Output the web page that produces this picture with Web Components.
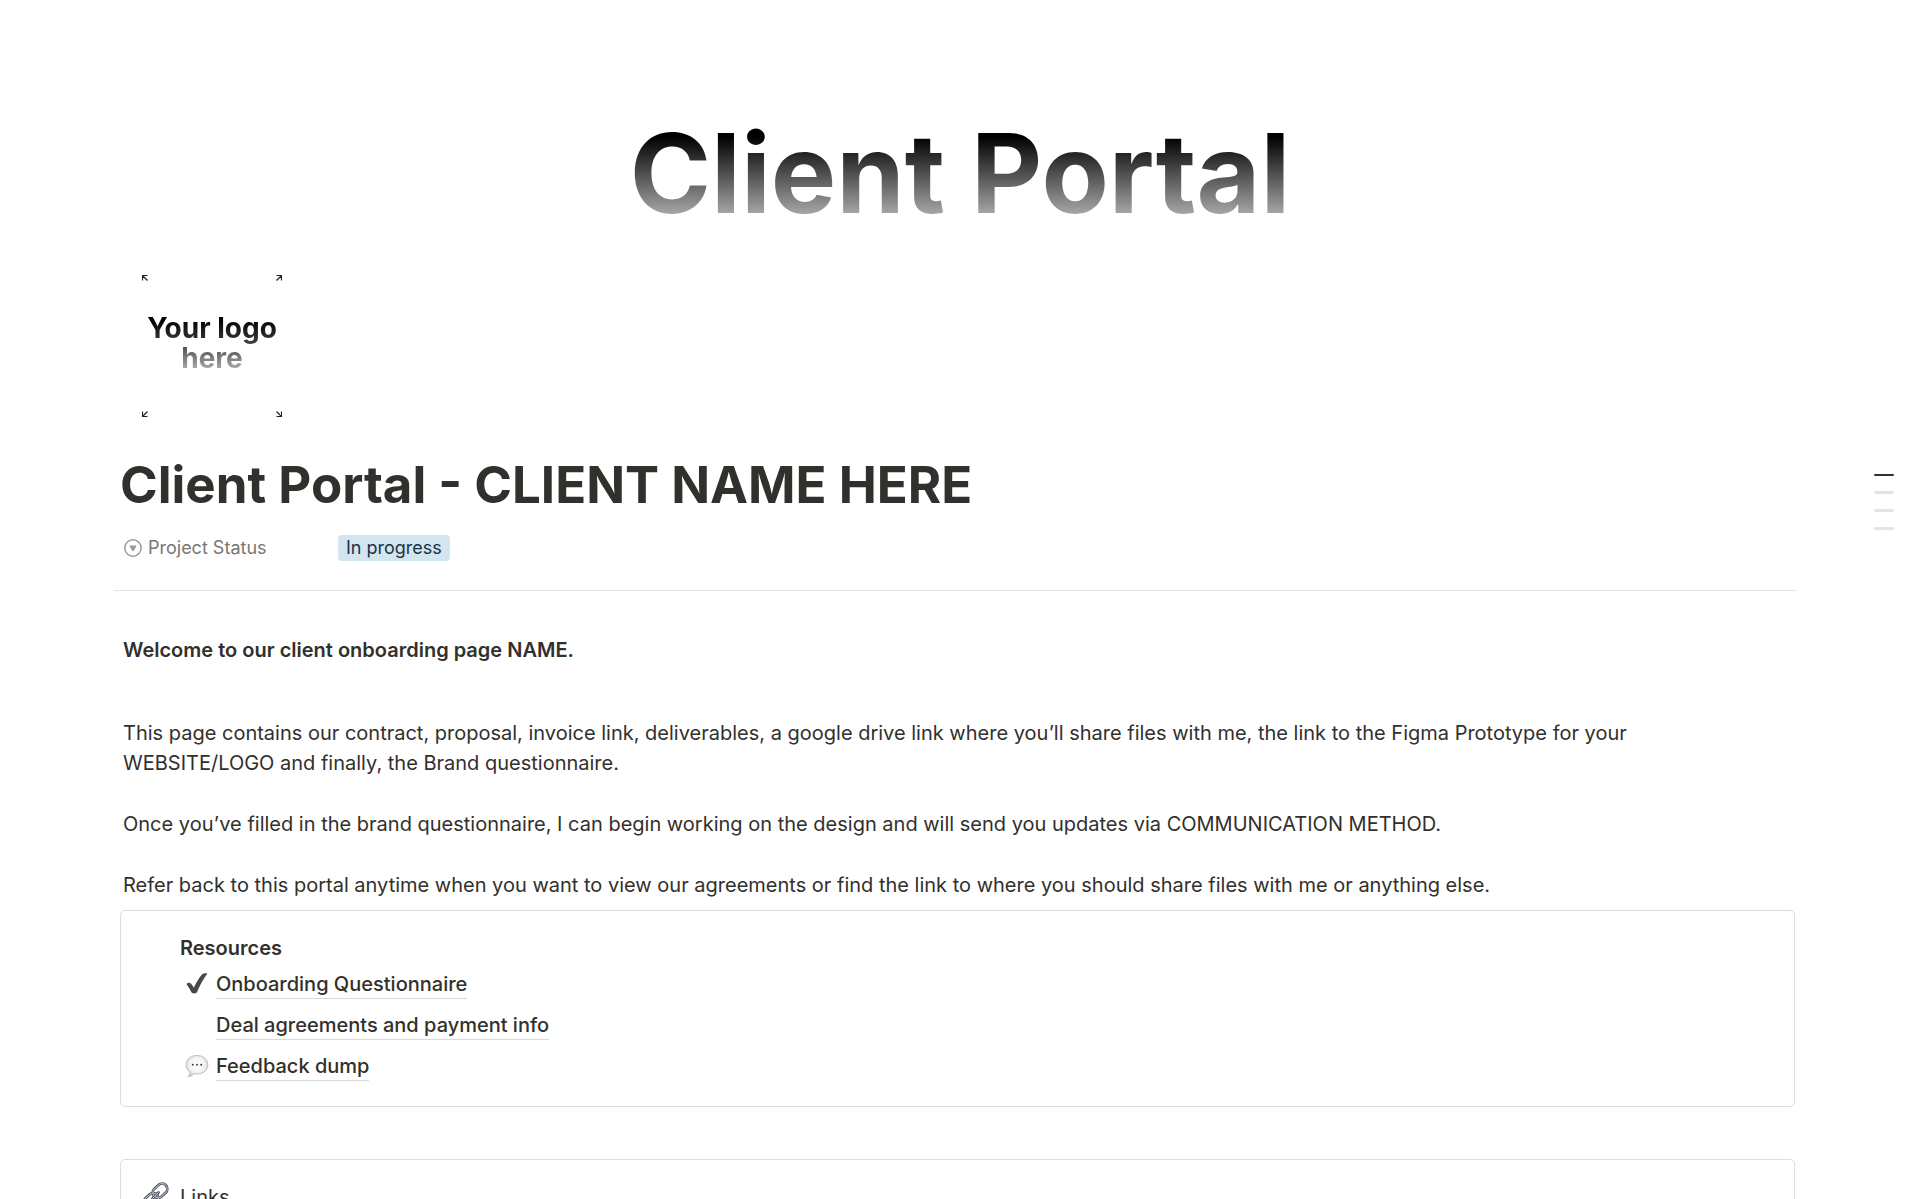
<!DOCTYPE html>
<html lang="en">
<head>
<meta charset="UTF-8">
<meta name="viewport" content="width=device-width, initial-scale=1.0">
<title>Client Portal</title>
<style>
    html {
        background: #fff;
    }

    body {
        margin: 0;
        color: #32302c;
        font-family: Inter, "Liberation Sans", sans-serif;
        font-size: 20px;
        line-height: 30px;
        --line: #e5e4e2;
        --box-line: #dedddb;
    }
</style>
</head>
<body>
<portal-page>
    <portal-cover slot="cover">Client Portal</portal-cover>
    <portal-logo slot="logo">Your logo<br>here</portal-logo>
    <span slot="title">Client Portal - CLIENT NAME HERE</span>
    <page-property slot="properties" label="Project Status">In progress</page-property>

    <text-block strong>Welcome to our client onboarding page NAME.</text-block>
    <text-block>This page contains our contract, proposal, invoice link, deliverables, a google drive link where you’ll share files with me, the link to the Figma Prototype for your WEBSITE/LOGO and finally, the Brand questionnaire.</text-block>
    <text-block>Once you’ve filled in the brand questionnaire, I can begin working on the design and will send you updates via COMMUNICATION METHOD.</text-block>
    <text-block>Refer back to this portal anytime when you want to view our agreements or find the link to where you should share files with me or anything else.</text-block>

    <call-out>
        <strong slot="heading">Resources</strong>
        <page-link icon="check" href="#onboarding">Onboarding Questionnaire</page-link>
        <page-link href="#agreements">Deal agreements and payment info</page-link>
        <page-link icon="speech" href="#feedback">Feedback dump</page-link>
    </call-out>
    <call-out icon="chain">
        <span slot="heading">Links</span>
    </call-out>
</portal-page>
<page-outline></page-outline>

<script>
const icons = {
    check: `
        <svg width="24" height="24" viewBox="0 0 24 24" aria-hidden="true">
            <path d="M1.500 12.200c.8-1.400 3-1.900 4.300-.7 1.300 1.100 2.200 2.700 3 4.200C11.300 10.300 14.200 5.500 17.500 2c1.300-.8 3.400-.9 4.900-.5C18.200 7 15.300 13 12.400 19.200c-.6 1.500-1.500 2.200-3.200 2.200s-2.500-.5-3.200-1.900C4.800 17 3.300 14.600 1.500 12.200z" fill="#48484a"/>
        </svg>`,
    speech: `
        <svg width="24" height="24" viewBox="0 0 24 24" aria-hidden="true">
            <defs>
                <radialGradient id="bubble" cx=".5" cy=".45" r=".6">
                    <stop offset="0" stop-color="#fff"/>
                    <stop offset=".6" stop-color="#f3f3f3"/>
                    <stop offset="1" stop-color="#c4c4c4"/>
                </radialGradient>
            </defs>
            <path d="M12 1.500C5.700 1.500 1.200 5.300 1.200 10.800c0 3.100 1.400 5.600 3.700 7.100.1 1.800-.5 3.400-1.700 4.700 2.400-.2 4.300-1.200 5.700-2.900 1 .2 2 .3 3.100.3 6.300 0 10.800-3.800 10.800-9.200S18.300 1.500 12 1.500z" fill="url(#bubble)" stroke="#b2b2b2" stroke-width=".8"/>
            <g fill="#444">
                <circle cx="7.800" cy="10.700" r="1"/>
                <circle cx="12" cy="10.700" r="1"/>
                <circle cx="16.200" cy="10.700" r="1"/>
            </g>
        </svg>`,
    chain: `
        <svg width="28" height="28" viewBox="0 0 28 28" aria-hidden="true">
            <g fill="none" stroke-linecap="round">
                <g stroke="#4c5158" stroke-width="2.800">
                    <rect x="10" y="3.500" width="16" height="10.500" rx="5.250" transform="rotate(-43 18 8.700)"/>
                    <rect x="1" y="13" width="16" height="10.500" rx="5.250" transform="rotate(-43 9 18.200)"/>
                    <path d="M10.500 16.500l6-6"/>
                </g>
                <g stroke="#b5bec8" stroke-width="1">
                    <rect x="10" y="3.500" width="16" height="10.500" rx="5.250" transform="rotate(-43 18 8.700)"/>
                    <rect x="1" y="13" width="16" height="10.500" rx="5.250" transform="rotate(-43 9 18.200)"/>
                    <path d="M10.500 16.500l6-6"/>
                </g>
            </g>
        </svg>`
};

class PortalPage extends HTMLElement {
    constructor() {
        super();
        this.attachShadow({ mode: 'open' });
    }

    connectedCallback() {
        this.shadowRoot.innerHTML = `
            <style>
                :host {
                    display: block;
                }

                main {
                    padding: 0 125px 64px 120px;
                }

                h1 {
                    margin: 16px 0 20px;
                    font-size: 51px;
                    line-height: 60px;
                    font-weight: 700;
                }

                hr {
                    height: 1px;
                    margin: 29px -2px 44px -6px;
                    border: 0;
                    background: var(--line);
                }

                .content {
                    display: flex;
                    flex-direction: column;
                }
            </style>
            <slot name="cover"></slot>
            <main>
                <slot name="logo"></slot>
                <h1><slot name="title"></slot></h1>
                <slot name="properties"></slot>
                <hr>
                <div class="content"><slot></slot></div>
            </main>
        `;
    }
}

class PortalCover extends HTMLElement {
    constructor() {
        super();
        this.attachShadow({ mode: 'open' });
    }

    connectedCallback() {
        this.shadowRoot.innerHTML = `
            <style>
                :host {
                    display: block;
                    padding: 103px 24px 10px;
                    text-align: center;
                }

                span {
                    display: inline-block;
                    font-size: 110px;
                    line-height: 140px;
                    font-weight: 700;
                    color: transparent;
                    background: linear-gradient(to bottom, #000 24%, #a8a8a8 80%);
                    -webkit-background-clip: text;
                    background-clip: text;
                }
            </style>
            <span><slot></slot></span>
        `;
    }
}

class PortalLogo extends HTMLElement {
    constructor() {
        super();
        this.attachShadow({ mode: 'open' });
    }

    connectedCallback() {
        const arrow = `
            <svg width="6" height="6" viewBox="0 0 6 6" aria-hidden="true">
                <path d="M.5 5.500V.5h5M.5.5l5 5" fill="none" stroke="#222" stroke-width="1.200"/>
            </svg>`;

        this.shadowRoot.innerHTML = `
            <style>
                :host {
                    display: grid;
                    grid-template-columns: auto 1fr auto;
                    grid-template-rows: auto 1fr auto;
                    box-sizing: border-box;
                    width: 184px;
                    height: 186px;
                    padding: 22px;
                }

                svg {
                    display: block;
                    grid-column: 1;
                    grid-row: 1;
                }

                svg:nth-of-type(2) {
                    grid-column: 3;
                    transform: rotate(90deg);
                }

                svg:nth-of-type(3) {
                    grid-column: 3;
                    grid-row: 3;
                    transform: rotate(180deg);
                }

                svg:nth-of-type(4) {
                    grid-row: 3;
                    transform: rotate(270deg);
                }

                div {
                    grid-column: 1 / 4;
                    grid-row: 2;
                    place-self: center;
                    padding-bottom: 6px;
                    font-size: 28px;
                    line-height: 30px;
                    font-weight: 700;
                    text-align: center;
                    white-space: nowrap;
                    color: transparent;
                    background: linear-gradient(to bottom, #000 10%, #333 40%, #aaa 85%);
                    -webkit-background-clip: text;
                    background-clip: text;
                }
            </style>
            ${arrow.repeat(4)}
            <div><slot></slot></div>
        `;
    }
}

class PageProperty extends HTMLElement {
    constructor() {
        super();
        this.attachShadow({ mode: 'open' });
    }

    connectedCallback() {
        this.shadowRoot.innerHTML = `
            <style>
                :host {
                    display: flex;
                    align-items: center;
                    height: 26px;
                    font-size: 18px;
                    line-height: 26px;
                }

                .label {
                    display: flex;
                    align-items: center;
                    gap: 6px;
                    width: 214px;
                    padding-left: 4px;
                    color: #787774;
                }

                .value {
                    padding: 0 8px;
                    border-radius: 4px;
                    color: #183347;
                    background: #d3e5ef;
                }
            </style>
            <span class="label">
                <svg width="18" height="18" viewBox="0 0 18 18" aria-hidden="true">
                    <circle cx="9" cy="9" r="8.200" fill="none" stroke="#9b9a97" stroke-width="1.500"/>
                    <path d="M6.200 6.600h5.600c.5 0 .7.400.5.800l-2.800 4.500c-.2.400-.8.400-1 0L5.700 7.400c-.2-.4 0-.8.5-.8z" fill="#9b9a97"/>
                </svg>
                ${this.getAttribute('label')}
            </span>
            <span class="value"><slot></slot></span>
        `;
    }
}

class TextBlock extends HTMLElement {
    constructor() {
        super();
        this.attachShadow({ mode: 'open' });
    }

    connectedCallback() {
        this.shadowRoot.innerHTML = `
            <style>
                :host {
                    display: block;
                    padding: 0 32px 0 3px;
                    margin-bottom: 31px;
                }

                :host([strong]) {
                    margin-bottom: 53px;
                    font-weight: 600;
                }

                :host(:last-of-type) {
                    margin-bottom: 10px;
                }

                p {
                    margin: 0;
                }
            </style>
            <p><slot></slot></p>
        `;
    }
}

class CallOut extends HTMLElement {
    constructor() {
        super();
        this.attachShadow({ mode: 'open' });
    }

    connectedCallback() {
        this.shadowRoot.innerHTML = `
            <style>
                :host {
                    display: grid;
                    grid-template-columns: 28px 1fr;
                    column-gap: 10px;
                    padding: 22px 21px 17px;
                    margin-bottom: 52px;
                    border: 1px solid var(--box-line);
                    border-radius: 5px;
                }

                .icon svg {
                    display: block;
                }

                .heading {
                    margin-bottom: 3px;
                }

                ::slotted(strong) {
                    font-weight: 600;
                }
            </style>
            <div class="icon">${icons[this.getAttribute('icon')] || ''}</div>
            <section>
                <div class="heading"><slot name="heading"></slot></div>
                <slot></slot>
            </section>
        `;
    }
}

class PageLink extends HTMLElement {
    constructor() {
        super();
        this.attachShadow({ mode: 'open' });
    }

    connectedCallback() {
        this.shadowRoot.innerHTML = `
            <style>
                :host {
                    display: flex;
                    padding: 3px 0 8px 5px;
                }

                a {
                    display: flex;
                    gap: 7px;
                    align-items: center;
                    color: inherit;
                    font-weight: 500;
                    text-decoration: none;
                }

                .icon {
                    width: 24px;
                    height: 24px;
                }

                .icon svg {
                    display: block;
                }

                .text {
                    box-shadow: 0 -1px 0 #dad9d7 inset;
                }
            </style>
            <a href="${this.getAttribute('href')}">
                <span class="icon">${icons[this.getAttribute('icon')] || ''}</span>
                <span class="text"><slot></slot></span>
            </a>
        `;
    }
}

class PageOutline extends HTMLElement {
    constructor() {
        super();
        this.attachShadow({ mode: 'open' });
    }

    connectedCallback() {
        this.shadowRoot.innerHTML = `
            <style>
                :host {
                    position: fixed;
                    top: 474px;
                    right: 26px;
                    display: flex;
                    flex-direction: column;
                    gap: 15px;
                }

                i {
                    width: 20px;
                    height: 3px;
                    border-radius: 2px;
                    background: #e4e4e2;
                }

                i:first-of-type {
                    height: 2px;
                    background: #32302c;
                }
            </style>
            <i></i><i></i><i></i><i></i>
        `;
    }
}

customElements.define('portal-page', PortalPage);
customElements.define('portal-cover', PortalCover);
customElements.define('portal-logo', PortalLogo);
customElements.define('page-property', PageProperty);
customElements.define('text-block', TextBlock);
customElements.define('call-out', CallOut);
customElements.define('page-link', PageLink);
customElements.define('page-outline', PageOutline);
</script>
</body>
</html>
